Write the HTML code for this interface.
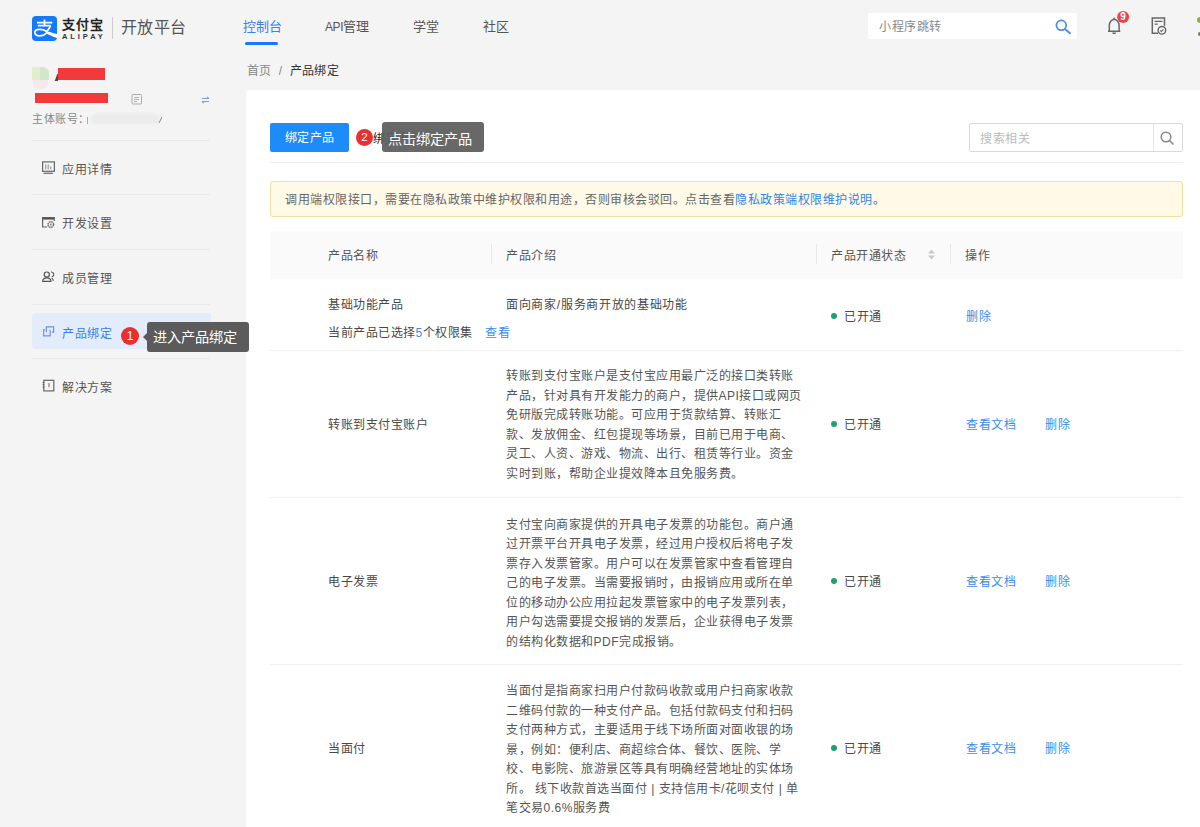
<!DOCTYPE html>
<html lang="zh-CN"><head><meta charset="utf-8">
<style>
*{margin:0;padding:0;box-sizing:border-box}
html,body{width:1200px;height:827px;overflow:hidden;background:#f4f4f4;font-family:"Liberation Sans",sans-serif;color:#484848}
.a{position:absolute;white-space:nowrap}
.t12{font-size:12px;letter-spacing:.5px;line-height:16px}
.card{position:absolute;left:246px;top:90px;width:960px;height:760px;background:#fff;border-radius:4px}
.nav{font-size:13px;line-height:18px;color:#555}
.menu{font-size:12px;letter-spacing:.5px;line-height:18px;color:#555}
.div{position:absolute;height:1px;background:#e9e9e9}
.desc{font-size:12px;letter-spacing:.5px;line-height:19.5px;color:#555}
.link{color:#3b8ee6}
.dot{position:absolute;width:6px;height:6px;border-radius:50%;background:#1aa36f}
</style></head><body>
<div class="card"></div>

<!-- header -->
<div class="a" style="left:32px;top:16px;width:25px;height:25px;background:#1677ff;border-radius:4px;overflow:hidden">
<svg width="25" height="25" viewBox="0 0 25 25"><g fill="none" stroke="#fff" stroke-width="1.7"><path d="M4.9 6.6H20.3M12.5 3.6V9.6M5.8 9.6H18.5"/><path d="M18.6 9.6C17.6 12 16.3 14 14.6 15.6"/><path d="M14.8 15.6C11 12.6 2.8 12.4 2.8 16.6C2.8 21 11.5 20.8 14.8 16.4"/></g><path d="M14.4 14.8C18 16.2 22 17.6 26 18.2V22.2C21.5 20.8 17.5 19.2 13.8 17.2Z" fill="#fff"/></svg></div>
<div class="a" style="left:61.5px;top:16px;font-size:13px;line-height:17px;font-weight:bold;color:#222;letter-spacing:1.2px">支付宝</div>
<div class="a" style="left:62px;top:33px;font-size:7.5px;line-height:8px;font-weight:bold;color:#333;letter-spacing:2.9px">ALIPAY</div>
<div class="a" style="left:112px;top:17px;width:1px;height:22px;background:#ccc"></div>
<div class="a" style="left:121px;top:17px;font-size:16px;line-height:22px;letter-spacing:.3px;color:#555">开放平台</div>

<div class="a nav" style="left:243px;top:18px;color:#3b82e8">控制台</div>
<div class="a" style="left:245px;top:42px;width:33px;height:3px;border-radius:2px;background:#1677ff"></div>
<div class="a nav" style="left:325px;top:18px"><span style="font-size:12px;letter-spacing:-.4px">API</span>管理</div>
<div class="a nav" style="left:413px;top:18px;letter-spacing:-.5px">学堂</div>
<div class="a nav" style="left:483px;top:18px;letter-spacing:-.5px">社区</div>

<div class="a" style="left:868px;top:13px;width:209px;height:26px;background:#fff;border-radius:2px"></div>
<div class="a" style="left:879px;top:19px;font-size:12px;letter-spacing:.5px;line-height:16px;color:#888">小程序跳转</div>
<svg class="a" style="left:1040px;top:0px" width="160" height="50" viewBox="1040 0 160 50"><circle cx="1061.3" cy="25.3" r="4.9" fill="none" stroke="#4a8ee8" stroke-width="1.8"/><path d="M1065 29l5 4.3" stroke="#4a8ee8" stroke-width="1.9" stroke-linecap="round"/><path d="M1108 31.3h12.3M1109.3 31.3v-5.8a4.9 5.9 0 0 1 9.8 0v5.8" fill="none" stroke="#666" stroke-width="1.5" stroke-linejoin="round"/><path d="M1112.2 32.4a2 1.8 0 0 0 4 0z" fill="#666"/><circle cx="1114.2" cy="18.6" r="1" fill="#666"/><circle cx="1123.1" cy="16.9" r="6" fill="#e8454a"/><path d="M1158 33.2h-5.7V17.9h12.2v7.8" fill="none" stroke="#666" stroke-width="1.5"/><path d="M1154.6 21.4h7.8M1154.6 24.1h3.2" stroke="#666" stroke-width="1.3"/><circle cx="1161.9" cy="30.3" r="3.8" fill="#f4f4f4" stroke="#666" stroke-width="1.4"/><path d="M1160.2 30.4l1.2 1.1 2.1-2.1" fill="none" stroke="#666" stroke-width="1.1"/></svg>

<div class="a" style="left:1117px;top:11px;width:12px;height:12px;color:#fff;font-size:10px;line-height:12px;text-align:center;font-weight:bold">9</div>
<div class="a" style="left:1197px;top:17px;width:6px;height:6px;border-radius:3px;background:#8fae4e"></div><div class="a" style="left:1197.5px;top:31.5px;width:6px;height:4px;border-radius:2px;background:#5f7f55"></div>

<!-- sidebar -->
<div class="a" style="left:32px;top:67px;width:17px;height:13px;border-radius:1px 6px 0 0;background:linear-gradient(90deg,#e2edcc 45%,#d3e6c9 45%)"></div><div class="a" style="left:33px;top:80px;width:15px;height:9px;border-radius:0 0 5px 5px;background:#f4eaea"></div><div class="a" style="left:56px;top:74px;width:3px;height:7px;background:#6a3a3a;transform:skewX(-20deg)"></div>
<div class="a" style="left:58px;top:68px;width:47px;height:12px;background:#f23a3a"></div>
<div class="a" style="left:35px;top:93px;width:73px;height:10px;background:#f23a3a"></div>
<svg class="a" style="left:131px;top:93px" width="12" height="12" viewBox="0 0 12 12"><rect x="1" y="1.5" width="9.5" height="9.5" rx="1" fill="none" stroke="#aaa" stroke-width="1"/><path d="M3 4.5h5M3 6.5h5M3 8.5h3" stroke="#aaa" stroke-width=".9"/></svg>
<svg class="a" style="left:201px;top:96px" width="9" height="8" viewBox="0 0 9 8"><path d="M1 2.5h7M6 .8l2 1.7M8 5.5H1M3 7.2L1 5.5" fill="none" stroke="#7a9de6" stroke-width="1.1"/></svg>
<div class="a" style="left:32px;top:112px;font-size:11px;letter-spacing:.5px;line-height:15px;color:#888">主体账号：</div>
<div class="a" style="left:91px;top:114px;width:68px;height:10px;background:#ececec;border-radius:4px;filter:blur(1px)"></div><div class="a" style="left:87px;top:117px;width:1px;height:7px;background:#aaa"></div><div class="a" style="left:160px;top:117px;width:1px;height:6px;background:#888;transform:skewX(-25deg)"></div>

<div class="div" style="left:32px;top:140px;width:178px"></div>
<div class="div" style="left:32px;top:194px;width:178px"></div>
<div class="div" style="left:32px;top:249px;width:178px"></div>
<div class="div" style="left:32px;top:304px;width:178px"></div>
<div class="div" style="left:32px;top:358px;width:178px"></div>

<svg class="a" style="left:40px;top:158px" width="18" height="18" viewBox="40 158 18 18"><rect x="42.6" y="161.9" width="11.8" height="9.4" fill="none" stroke="#666" stroke-width="1.2"/><path d="M43.5 173.3h9.4" stroke="#666" stroke-width="1.2"/><path d="M45.8 164.5v4.8M48.2 164.5v4.8M50.8 166.4v2.9" stroke="#888" stroke-width="1"/></svg>
<div class="a menu" style="left:62px;top:161px">应用详情</div>
<svg class="a" style="left:40px;top:213px" width="18" height="18" viewBox="40 213 18 18"><path d="M47 227H42.6V217.5H54.3V221" fill="none" stroke="#666" stroke-width="1.2"/><path d="M42.6 218.6h11.7" stroke="#555" stroke-width="2"/><circle cx="50.8" cy="224.6" r="2.8" fill="none" stroke="#777" stroke-width="1.6" stroke-dasharray="1.6 .6"/><circle cx="50.8" cy="224.6" r="1" fill="#888"/></svg>
<div class="a menu" style="left:62px;top:215px">开发设置</div>
<svg class="a" style="left:40px;top:267px" width="18" height="18" viewBox="40 267 18 18"><circle cx="46.8" cy="274.6" r="2.6" fill="none" stroke="#555" stroke-width="1.2"/><path d="M51 272a2.4 2.4 0 1 1 0.6 4.8" fill="none" stroke="#555" stroke-width="1.1"/><path d="M42.6 281.3c.3-2.3 1.8-3.4 4.2-3.4s3.9 1.1 4.2 3.4z" fill="none" stroke="#555" stroke-width="1.2" stroke-linejoin="round"/><path d="M51.6 278.2c1 .4 1.6 1.3 1.8 2.6" fill="none" stroke="#555" stroke-width="1.1"/></svg>
<div class="a menu" style="left:62px;top:270px">成员管理</div>

<div class="a" style="left:32px;top:313px;width:179px;height:36px;border-radius:4px;background:#e3ecfa"></div>
<svg class="a" style="left:40px;top:322px" width="18" height="18" viewBox="40 322 18 18"><path d="M46.3 332.2V326.8H53.6V332.2H52" fill="none" stroke="#6b8fe6" stroke-width="1.2"/><path d="M45 329.8H43.6V335.8H50.2V329.8" fill="none" stroke="#7a8fe8" stroke-width="1.2"/></svg>
<div class="a menu" style="left:62px;top:325px;color:#3b7fe3">产品绑定</div>
<div class="a" style="left:121px;top:327px;width:18px;height:18px;border-radius:50%;background:#e8302f;color:#fff;font-size:12px;line-height:18px;text-align:center">1</div>
<div class="a" style="left:147px;top:322px;width:102px;height:30px;border-radius:3px;background:#5b5b5b"></div>
<div class="a" style="left:143px;top:333px;width:0;height:0;border-top:4px solid transparent;border-bottom:4px solid transparent;border-right:4px solid #5b5b5b"></div>
<div class="a" style="left:153px;top:328px;font-size:14.2px;line-height:18px;color:#fff">进入产品绑定</div>

<svg class="a" style="left:40px;top:376px" width="18" height="18" viewBox="40 376 18 18"><rect x="43.8" y="380.3" width="10" height="10.6" fill="none" stroke="#666" stroke-width="1.2"/><path d="M42.6 382.5h1.6M42.6 384.8h1.6M42.6 387.2h1.6" stroke="#555" stroke-width="1"/><path d="M49 383v4.3" stroke="#777" stroke-width="1.1"/></svg>
<div class="a menu" style="left:62px;top:379px">解决方案</div>

<!-- breadcrumb -->
<div class="a" style="left:247px;top:62px;font-size:12px;letter-spacing:.3px;line-height:18px;color:#888">首页&nbsp;&nbsp;/&nbsp;&nbsp;<span style="color:#333">产品绑定</span></div>

<!-- card -->
<div class="a" style="left:270px;top:123px;width:79px;height:29px;border-radius:2px;background:#1d8cf8;color:#fff;font-size:12px;letter-spacing:.5px;line-height:31px;text-align:center">绑定产品</div>
<div class="a" style="left:373px;top:131px;font-size:12px;letter-spacing:.5px;line-height:16px;color:#222">绑定产品</div>
<div class="a" style="left:356px;top:129px;width:17px;height:17px;border-radius:50%;background:#e8302f;color:#fff;font-size:11.5px;line-height:17px;text-align:center">2</div>
<div class="a" style="left:382px;top:122px;width:102px;height:30px;border-radius:3px;background:rgba(95,95,95,.94)"></div>
<div class="a" style="left:388px;top:130px;font-size:14.2px;line-height:18px;color:#fff">点击绑定产品</div>

<div class="a" style="left:969px;top:123px;width:214px;height:29px;border:1px solid #d9d9d9;border-radius:2px;background:#fff"></div>
<div class="a" style="left:1153px;top:124px;width:1px;height:27px;background:#e4e4e4"></div>
<div class="a" style="left:980px;top:131px;font-size:12px;letter-spacing:.5px;line-height:16px;color:#bbb">搜索相关</div>
<svg class="a" style="left:1159px;top:130px" width="16" height="16" viewBox="0 0 16 16"><circle cx="7" cy="7" r="4.8" fill="none" stroke="#888" stroke-width="1.5"/><path d="M10.5 10.5l3.5 3.5" stroke="#888" stroke-width="1.6" stroke-linecap="round"/></svg>

<div class="div" style="left:270px;top:162px;width:913px;background:#eeeeee"></div>

<div class="a" style="left:270px;top:181px;width:913px;height:36px;border:1px solid #f3e1a1;border-radius:3px;background:#fff9e7"></div>
<div class="a" style="left:285px;top:192px;font-size:12px;letter-spacing:.5px;line-height:16px;color:#666">调用端权限接口，需要在隐私政策中维护权限和用途，否则审核会驳回。点击查看<span class="link" style="color:#2d86e6">隐私政策端权限维护说明</span>。</div>

<!-- table header -->
<div class="a" style="left:270px;top:231px;width:913px;height:48px;background:#fafafa"></div>
<div class="a" style="left:491px;top:244px;width:1px;height:20px;background:#e8e8e8"></div>
<div class="a" style="left:816px;top:244px;width:1px;height:20px;background:#e8e8e8"></div>
<div class="a" style="left:950px;top:244px;width:1px;height:20px;background:#e8e8e8"></div>
<div class="a t12" style="left:328px;top:248px;color:#555">产品名称</div>
<div class="a t12" style="left:506px;top:248px;color:#555">产品介绍</div>
<div class="a t12" style="left:831px;top:248px;color:#555">产品开通状态</div>
<svg class="a" style="left:927px;top:249px" width="9" height="11" viewBox="0 0 9 11"><path d="M4.5 0.5l3.5 4h-7z M4.5 10.5l3.5-4h-7z" fill="#c8c8c8"/></svg>
<div class="a t12" style="left:965px;top:248px;color:#555">操作</div>

<!-- row 1 -->
<div class="a t12" style="left:328px;top:297px">基础功能产品</div>
<div class="a t12" style="left:328px;top:325px">当前产品已选择<span class="link">5</span>个权限集</div>
<div class="a t12 link" style="left:485px;top:325px">查看</div>
<div class="a t12" style="left:506px;top:297px;letter-spacing:.7px">面向商家/服务商开放的基础功能</div>
<div class="dot" style="left:831px;top:313px"></div>
<div class="a t12" style="left:844px;top:309px">已开通</div>
<div class="a t12 link" style="left:966px;top:309px">删除</div>
<div class="div" style="left:270px;top:350px;width:913px;background:#efefef"></div>

<!-- row 2 -->
<div class="a t12" style="left:328px;top:417px">转账到支付宝账户</div>
<div class="a desc" style="left:506px;top:367px">转账到支付宝账户是支付宝应用最广泛的接口类转账<br>产品，针对具有开发能力的商户，提供API接口或网页<br>免研版完成转账功能。可应用于货款结算、转账汇<br>款、发放佣金、红包提现等场景，目前已用于电商、<br>灵工、人资、游戏、物流、出行、租赁等行业。资金<br>实时到账，帮助企业提效降本且免服务费。</div>
<div class="dot" style="left:831px;top:421px"></div>
<div class="a t12" style="left:844px;top:417px">已开通</div>
<div class="a t12 link" style="left:966px;top:417px">查看文档</div>
<div class="a t12 link" style="left:1045px;top:417px">删除</div>
<div class="div" style="left:270px;top:497px;width:913px;background:#efefef"></div>

<!-- row 3 -->
<div class="a t12" style="left:328px;top:574px">电子发票</div>
<div class="a desc" style="left:506px;top:515.5px">支付宝向商家提供的开具电子发票的功能包。商户通<br>过开票平台开具电子发票，经过用户授权后将电子发<br>票存入发票管家。用户可以在发票管家中查看管理自<br>己的电子发票。当需要报销时，由报销应用或所在单<br>位的移动办公应用拉起发票管家中的电子发票列表，<br>用户勾选需要提交报销的发票后，企业获得电子发票<br>的结构化数据和PDF完成报销。</div>
<div class="dot" style="left:831px;top:578px"></div>
<div class="a t12" style="left:844px;top:574px">已开通</div>
<div class="a t12 link" style="left:966px;top:574px">查看文档</div>
<div class="a t12 link" style="left:1045px;top:574px">删除</div>
<div class="div" style="left:270px;top:664px;width:913px;background:#efefef"></div>

<!-- row 4 -->
<div class="a t12" style="left:328px;top:741px">当面付</div>
<div class="a desc" style="left:506px;top:682px">当面付是指商家扫用户付款码收款或用户扫商家收款<br>二维码付款的一种支付产品。包括付款码支付和扫码<br>支付两种方式，主要适用于线下场所面对面收银的场<br>景，例如：便利店、商超综合体、餐饮、医院、学<br>校、电影院、旅游景区等具有明确经营地址的实体场<br>所。 线下收款首选当面付 | 支持信用卡/花呗支付 | 单<br>笔交易0.6%服务费</div>
<div class="dot" style="left:831px;top:745px"></div>
<div class="a t12" style="left:844px;top:741px">已开通</div>
<div class="a t12 link" style="left:966px;top:741px">查看文档</div>
<div class="a t12 link" style="left:1045px;top:741px">删除</div>

</body></html>
